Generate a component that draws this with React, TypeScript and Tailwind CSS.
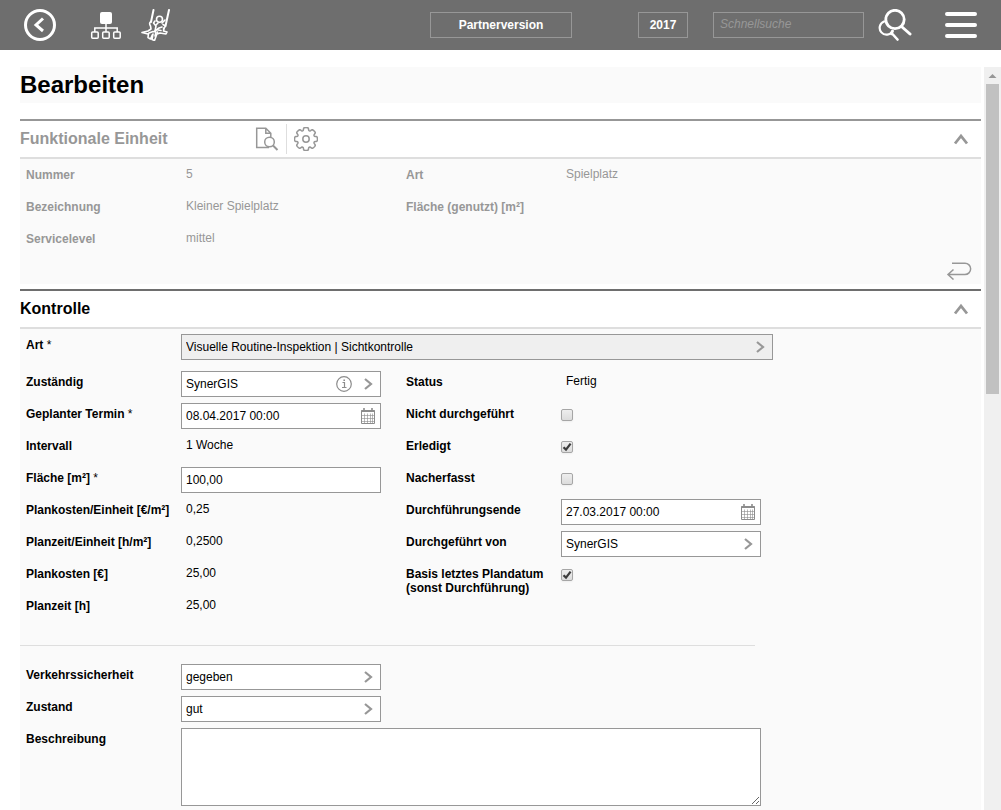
import React from "react";

const unitRowsLeft = [
  { label: "Nummer", value: "5" },
  { label: "Bezeichnung", value: "Kleiner Spielplatz" },
  { label: "Servicelevel", value: "mittel" },
];

const unitRowsRight = [
  { label: "Art", value: "Spielplatz" },
  { label: "Fläche (genutzt) [m²]", value: "" },
];

const planRows = [
  { label: "Plankosten/Einheit [€/m²]", value: "0,25" },
  { label: "Planzeit/Einheit [h/m²]", value: "0,2500" },
  { label: "Plankosten [€]", value: "25,00" },
  { label: "Planzeit [h]", value: "25,00" },
];

// Outline of a wheel with eight soft teeth
const gearPath = (() => {
  const points: string[] = [];
  for (let i = 0; i < 160; i++) {
    const a = (i / 160) * Math.PI * 2;
    const r = 10 + 1.4 * Math.tanh(Math.cos(8 * a) * 2.6 + 1.2);
    points.push(`${(12 + r * Math.cos(a)).toFixed(2)} ${(12 + r * Math.sin(a)).toFixed(2)}`);
  }
  return `M${points.join("L")}Z`;
})();

const ChevronRight = () => (
  <svg className="w-3 h-4 shrink-0" viewBox="0 0 12 16" fill="none" stroke="#979797" strokeWidth="2.2">
    <path d="M2 3 8 8l-6 5" />
  </svg>
);

const ChevronUp = () => (
  <svg className="w-4 h-3" viewBox="0 0 16 12" fill="none" stroke="#979797" strokeWidth="2.8">
    <path d="M2 10.5 8 3l6 7.5" />
  </svg>
);

const CalendarIcon = () => (
  <svg className="w-4 h-4" viewBox="0 0 16 16" fill="none" stroke="#8c8c8c">
    <path d="M1.5 2.5h13v13h-13z" />
    <path d="M1.500 3h13" strokeWidth="2" />
    <path d="M4 0v3M12 0v3" strokeWidth="1.6" />
    <path d="M4.5 5.500v10M7.5 5.500v10M10.5 5.500v10M12.5 5.500v10M2 7.5h12M2 10.5h12M2 13.500h12" strokeWidth="0.6" />
  </svg>
);

const InfoIcon = () => (
  <svg className="w-4 h-4" viewBox="0 0 16 16" fill="none" stroke="#8c8c8c" strokeWidth="1.2">
    <circle cx="8" cy="8" r="7.3" />
    <path d="M6.5 6.5h2v5M6 11.5h4.5" />
    <path d="M7.4 4.2h1.6" strokeWidth="1.6" />
  </svg>
);

const Row = ({ label, htmlFor, children }: { label: string; htmlFor?: string; children?: React.ReactNode }) => (
  <div className="flex h-8 items-start">
    {htmlFor ? (
      <label htmlFor={htmlFor} className="w-[155px] shrink-0 pt-1 font-bold whitespace-pre-line">
        <LabelText text={label} />
      </label>
    ) : (
      <span className="w-[155px] shrink-0 pt-1 font-bold">{label}</span>
    )}
    {children}
  </div>
);

const LabelText = ({ text }: { text: string }) =>
  text.endsWith(" *") ? (
    <>
      {text.slice(0, -2)} <span className="font-normal">*</span>
    </>
  ) : (
    <>{text}</>
  );

const Value = ({ children }: { children: React.ReactNode }) => <span className="pt-[3px] pl-[5px]">{children}</span>;

const Box = ({ children }: { children: React.ReactNode }) => (
  <div className="flex h-[26px] w-[200px] items-center border border-[#979797] bg-white">{children}</div>
);

const TextField = ({ id, value }: { id: string; value: string }) => (
  <input id={id} type="text" defaultValue={value} className="h-full min-w-0 flex-1 px-1 outline-none" />
);

const DateField = ({ id, value }: { id: string; value: string }) => (
  <Box>
    <TextField id={id} value={value} />
    <button type="button" aria-label="Kalender" className="mr-1">
      <CalendarIcon />
    </button>
  </Box>
);

const SelectField = ({ id, value }: { id: string; value: string }) => (
  <div className="grid h-[26px] w-[200px] items-center border border-[#979797] bg-white">
    <select id={id} defaultValue={value} className="col-start-1 row-start-1 h-full w-full appearance-none px-1 outline-none">
      <option>{value}</option>
    </select>
    <span className="pointer-events-none col-start-1 row-start-1 mr-[5px] justify-self-end">
      <ChevronRight />
    </span>
  </div>
);

const Checkbox = ({ id, checked }: { id: string; checked?: boolean }) => (
  <span className="mt-1.5 grid size-3">
    <input
      id={id}
      type="checkbox"
      defaultChecked={checked}
      className="peer col-start-1 row-start-1 size-3 appearance-none rounded-xs border border-[#a6a6a6] bg-linear-to-b from-[#eeeeee] to-[#dcdcdc] shadow-xs"
    />
    <svg
      className="pointer-events-none invisible col-start-1 row-start-1 size-3 peer-checked:visible"
      viewBox="0 0 12 12"
      fill="none"
      stroke="#3c3c3c"
      strokeWidth="2.2"
    >
      <path d="M2.5 6.2 5 8.6 9.6 2.6" />
    </svg>
  </span>
);

const Header = () => (
  <header className="flex h-[50px] shrink-0 items-center bg-[#6e6e6e] pr-6 pl-6 text-white">
    <button type="button" aria-label="Zurück">
      <svg className="size-8" viewBox="0 0 32 32" fill="none" stroke="white" strokeWidth="3">
        <circle cx="16" cy="16" r="14.5" />
        <path d="M19 9.5 12 16l7 6" />
      </svg>
    </button>
    <button type="button" aria-label="Struktur" className="ml-[34px]">
      <svg className="h-8 w-8" viewBox="0 0 32 32" fill="none" stroke="white" strokeWidth="1.5">
        <rect x="10" y="3" width="12" height="12" rx="2" fill="white" stroke="none" />
        <path d="M16 15v8M4.8 23v-4h22.4v4" />
        <rect x="1.7" y="23" width="6.5" height="6.3" rx="1" />
        <rect x="12.7" y="23" width="6.5" height="6.3" rx="1" />
        <rect x="23.7" y="23" width="6.5" height="6.3" rx="1" />
      </svg>
    </button>
    <button type="button" aria-label="Spielplatz" className="ml-[19px]">
      <svg className="h-8 w-8" viewBox="0 0 32 32" fill="none" stroke="white" strokeWidth="1.6" strokeLinecap="round" strokeLinejoin="round">
        <path d="M12.500 1 10 13M28 1l-3.500 16" strokeWidth="2" />
        <circle cx="18.500" cy="10.200" r="3" />
        <path d="M10 12.500c-2 1-1.500 3-.5 4.500l.5 3-3 2-6 1.500 6 1.500M14 12l-1.500 2 2.500 3-1 5" />
        <path d="m15 16 2-2M21 14l3-3M22 15.500l2.500 1.500-2 3M8 24l4-1.500 3 .5-1 4M14 22l4-3 3-1" />
        <path d="m7.500 24.500-.5 4 2.500 1.500 2-4.500M12 25l-1 5.500 2.500 1 2-5.500 1-3M16 25l3-1 6 1 1-2-3.500-1 .5-3" />
        <path d="m17 21 3 .5" />
      </svg>
    </button>
    <button type="button" className="ml-auto h-[26px] w-[142px] border border-[#979797] text-xs font-bold">
      Partnerversion
    </button>
    <button type="button" className="ml-[66px] h-[26px] w-[50px] border border-[#979797] text-xs font-bold">
      2017
    </button>
    <input
      type="search"
      aria-label="Schnellsuche"
      placeholder="Schnellsuche"
      className="ml-[25px] h-[26px] w-[151px] border border-[#979797] px-1.5 pb-0.5 text-xs italic outline-none placeholder:text-[#979797]"
    />
    <button type="button" aria-label="Suchen" className="ml-3.5">
      <svg className="h-8 w-[34px]" viewBox="0 0 34 32" fill="none" stroke="white" strokeLinecap="round">
        <circle cx="17" cy="10.500" r="9.200" strokeWidth="2.800" />
        <path d="M23.500 17.500 32 25" strokeWidth="3" />
        <path d="M6 12.500a6.800 6.800 0 1 0 8.500 9.500" strokeWidth="2.200" />
        <path d="M13.500 25 14.500 22M14.500 25l5 5.500" strokeWidth="2.600" />
      </svg>
    </button>
    <button type="button" aria-label="Menü" className="ml-[33px]">
      <svg className="size-8" viewBox="0 0 32 32" fill="none" stroke="white" strokeWidth="4" strokeLinecap="round">
        <path d="M2 5h28M2 16h28M2 27h28" />
      </svg>
    </button>
  </header>
);

const UnitSection = () => (
  <section className="mt-4 border-t-2 border-[#979797] text-[#979797]">
    <div className="flex h-[38px] items-center border-b-2 border-[#dedede]">
      <h2 className="w-[235px] text-base font-bold">Funktionale Einheit</h2>
      <button type="button" aria-label="Details">
        <svg className="size-6" viewBox="0 0 24 24" fill="none" stroke="#979797" strokeWidth="1.500">
          <path d="M14 20.500H1.700V1.200h9.100l5 5V10M10.800 1.200v5h5" />
          <circle cx="14.500" cy="15" r="4.800" />
          <path d="m18 18.500 4.500 4.500" strokeWidth="2" />
        </svg>
      </button>
      <div className="mx-[7px] h-[30px] w-px bg-[#dedede]" />
      <button type="button" aria-label="Einstellungen">
        <svg className="size-6" viewBox="0 0 24 24" fill="none" stroke="#979797" strokeWidth="1.500">
          <path d={gearPath} />
          <circle cx="12" cy="12" r="3.200" />
        </svg>
      </button>
      <button type="button" aria-label="Einklappen" className="mr-3 ml-auto">
        <ChevronUp />
      </button>
    </div>
    <div className="bg-[#fafafa] pt-[5px] pl-1.5">
      <div className="flex">
        <div className="w-[380px]">
          {unitRowsLeft.map((row) => (
            <Row key={row.label} label={row.label}>
              <Value>{row.value}</Value>
            </Row>
          ))}
        </div>
        <div>
          {unitRowsRight.map((row) => (
            <Row key={row.label} label={row.label}>
              <Value>{row.value}</Value>
            </Row>
          ))}
        </div>
      </div>
      <div className="flex h-6 items-start justify-end pr-[9px]">
        <button type="button" aria-label="Zurücksetzen">
          <svg className="h-5 w-[26px]" viewBox="0 0 26 20" fill="none" stroke="#979797" strokeWidth="1.500">
            <path d="M6 3.200h13a4.800 4.800 0 0 1 0 11.300H2M7.500 9.500 2 14.500l5.500 5" />
          </svg>
        </button>
      </div>
    </div>
  </section>
);

const ControlSection = () => (
  <section className="mt-[5px] flex flex-1 flex-col border-t-2 border-[#6e6e6e]">
    <div className="flex h-[38px] shrink-0 items-center border-b-2 border-[#dedede]">
      <h2 className="text-base font-bold">Kontrolle</h2>
      <button type="button" aria-label="Einklappen" className="mr-3 ml-auto">
        <ChevronUp />
      </button>
    </div>
    <div className="flex-1 bg-[#fafafa] pt-[5px] pb-1">
      <div className="mb-[5px] pl-1.5">
        <Row label="Art *" htmlFor="art">
          <div className="flex h-[26px] w-[592px] items-center border border-[#979797] bg-[#efefef]">
            <TextField id="art" value="Visuelle Routine-Inspektion | Sichtkontrolle" />
            <button type="button" aria-label="Art wählen" className="mr-[5px]">
              <ChevronRight />
            </button>
          </div>
        </Row>
      </div>
      <div className="flex pl-1.5">
        <div className="w-[380px]">
          <Row label="Zuständig" htmlFor="zustaendig">
            <Box>
              <TextField id="zustaendig" value="SynerGIS" />
              <button type="button" aria-label="Information" className="mr-[11px]">
                <InfoIcon />
              </button>
              <button type="button" aria-label="Zuständig wählen" className="mr-[5px]">
                <ChevronRight />
              </button>
            </Box>
          </Row>
          <Row label="Geplanter Termin *" htmlFor="termin">
            <DateField id="termin" value="08.04.2017 00:00" />
          </Row>
          <Row label="Intervall">
            <Value>1 Woche</Value>
          </Row>
          <Row label="Fläche [m²] *" htmlFor="flaeche">
            <Box>
              <TextField id="flaeche" value="100,00" />
            </Box>
          </Row>
          {planRows.map((row) => (
            <Row key={row.label} label={row.label}>
              <Value>{row.value}</Value>
            </Row>
          ))}
        </div>
        <div>
          <Row label="Status">
            <Value>Fertig</Value>
          </Row>
          <Row label="Nicht durchgeführt" htmlFor="nicht">
            <Checkbox id="nicht" />
          </Row>
          <Row label="Erledigt" htmlFor="erledigt">
            <Checkbox id="erledigt" checked />
          </Row>
          <Row label="Nacherfasst" htmlFor="nacherfasst">
            <Checkbox id="nacherfasst" />
          </Row>
          <Row label="Durchführungsende" htmlFor="ende">
            <DateField id="ende" value="27.03.2017 00:00" />
          </Row>
          <Row label="Durchgeführt von" htmlFor="von">
            <SelectField id="von" value="SynerGIS" />
          </Row>
          <Row label={"Basis letztes Plandatum\n(sonst Durchführung)"} htmlFor="basis">
            <Checkbox id="basis" checked />
          </Row>
        </div>
      </div>
      <hr className="my-[18px] w-[735px] border-[#dedede]" />
      <div className="pl-1.5">
        <Row label="Verkehrssicherheit" htmlFor="sicherheit">
          <SelectField id="sicherheit" value="gegeben" />
        </Row>
        <Row label="Zustand" htmlFor="zustand">
          <SelectField id="zustand" value="gut" />
        </Row>
        <Row label="Beschreibung" htmlFor="beschreibung">
          <textarea id="beschreibung" className="h-[78px] w-[580px] shrink-0 border border-[#979797] bg-white p-1 outline-none" />
        </Row>
      </div>
    </div>
  </section>
);

const App = () => {
  return (
    <div className="flex h-screen flex-col overflow-hidden bg-white font-['Liberation_Sans',Arial,sans-serif] text-xs leading-[14px] text-black">
      <Header />
      <div className="mt-[17px] flex min-h-0 flex-1">
        <main className="mr-[3px] ml-5 flex min-w-0 flex-1 flex-col">
          <h1 className="h-9 shrink-0 bg-[#fafafa] text-2xl leading-9 font-bold">Bearbeiten</h1>
          <UnitSection />
          <ControlSection />
        </main>
        {/* Scroll track */}
        <div className="flex w-[17px] shrink-0 flex-col items-center bg-[#f0f0f0]">
          <svg className="h-[17px] w-[17px] shrink-0" viewBox="0 0 17 17" fill="#979797">
            <path d="M4.500 11h8L8.500 7z" />
          </svg>
          <div className="h-[310px] w-[13px] bg-[#c1c1c1]" />
        </div>
      </div>
    </div>
  );
};

export default App;
